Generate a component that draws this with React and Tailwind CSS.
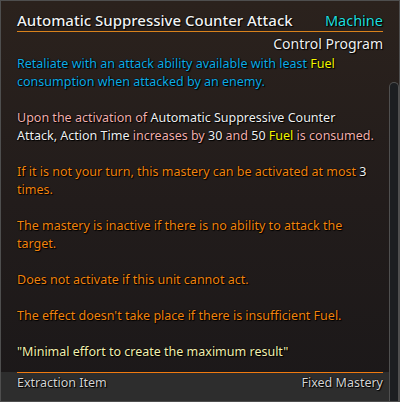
export default function App() {
  const outline = "[text-shadow:0_0_1px_#000,0_0_1px_#000,1px_1px_1px_#000]";

  return (
    <div
      className={`flex h-[402px] w-[400px] overflow-hidden border border-[#4e4e4e] bg-gradient-to-b from-[#2b221d] via-[#221c1b] to-[#1b1819] text-[12.5px] leading-[18px] ${outline}`}
      style={{ fontFamily: '"Noto Sans", "Liberation Sans", sans-serif' }}
    >
      <div className="flex flex-1 flex-col">
        <div className="pl-[16px] pr-[6px] pt-[10px]">
          <div className="flex items-center justify-between">
            <span className="text-[15px] font-medium leading-[18px] text-[#f2f2f2]">
              Automatic Suppressive Counter Attack
            </span>
            <span className="text-[14.5px] leading-[18px] text-[#22dede]">Machine</span>
          </div>
          <div className="mt-[2px] h-px bg-[#d9821c]" />
          <div className="mt-[3px] text-right text-[14px] leading-[18px] text-[#f0f0f0]">
            Control Program
          </div>

          <div className="mt-[2px] flex flex-col gap-[18px] whitespace-nowrap">
            <p className="text-[#10ace4]">
              Retaliate with an attack ability available with least{" "}
              <span className="text-[#f6f600]">Fuel</span>
              <br />
              consumption when attacked by an enemy.
            </p>

            <p className="text-[#f2b0ae]">
              Upon the activation of{" "}
              <span className="text-[#f0f0f0]">Automatic Suppressive Counter</span>
              <br />
              <span className="text-[#f0f0f0]">Attack, Action Time</span> increases by{" "}
              <span className="text-[#f0f0f0]">30</span> and{" "}
              <span className="text-[#f0f0f0]">50</span>{" "}
              <span className="text-[#f6f600]">Fuel</span> is consumed.
            </p>

            <p className="text-[#f08410]">
              If it is not your turn, this mastery can be activated at most{" "}
              <span className="text-[#f0f0f0]">3</span>
              <br />
              times.
            </p>

            <p className="text-[#f08410]">
              The mastery is inactive if there is no ability to attack the
              <br />
              target.
            </p>

            <p className="text-[#f08410]">Does not activate if this unit cannot act.</p>

            <p className="text-[#f08410]">
              The effect doesn't take place if there is insufficient Fuel.
            </p>

            <p className="text-[#f2f0b0]">"Minimal effort to create the maximum result"</p>
          </div>
        </div>

        <div className="mt-auto h-[29px] bg-[#2d2d2d] pl-[16px] pr-[6px]">
          <div className="h-px bg-[#f07a10]" />
          <div className="mt-[1px] flex justify-between text-[#d4d4d4]">
            <span>Extraction Item</span>
            <span>Fixed Mastery</span>
          </div>
        </div>
      </div>

      <div className="flex w-[10px] flex-col pt-[81px]">
        <div className="flex-1 rounded-t-[5px] border border-b-0 border-[#505050] bg-[#1c1e21]" />
      </div>
    </div>
  );
}
